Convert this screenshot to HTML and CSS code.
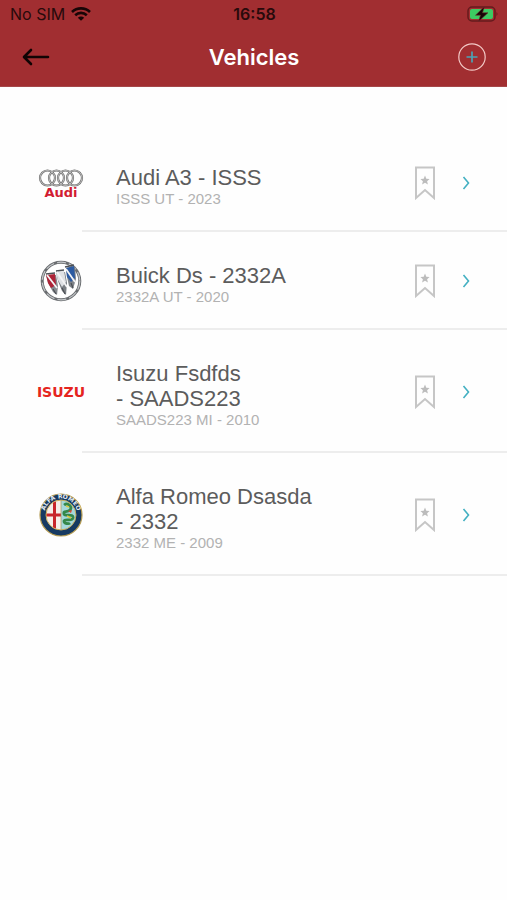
FILE: index.html
```html
<!DOCTYPE html>
<html lang="en">
<head>
<meta charset="utf-8">
<meta name="viewport" content="width=device-width, initial-scale=1">
<title>Vehicles</title>
<link rel="stylesheet" href="styles.css">
</head>
<body>
<svg width="0" height="0" class="sprite" aria-hidden="true">
  <symbol id="bookmark" viewBox="0 0 22 34">
    <path d="M2 1.500H20V32L11 24L2 32Z" fill="none" stroke="#c6c6c6" stroke-width="2"/>
    <path d="M11 9.500L12.300 12.700L15.600 13L13.100 15.200L13.900 18.500L11 16.700L8.100 18.500L8.900 15.200L6.400 13L9.700 12.700Z" fill="#bcbcbc"/>
  </symbol>
  <symbol id="chevron" viewBox="0 0 8 14">
    <path d="M1.500 1L6.500 7L1.500 13" fill="none" stroke="#43b0c2" stroke-width="1.600"/>
  </symbol>
</svg>
<header class="top">
  <div class="status">
    <div class="carrier">
      <span>No SIM</span>
      <svg width="20" height="14" viewBox="0 0 20 14" aria-hidden="true">
        <g fill="none" stroke="#180506" stroke-width="2.600">
          <path d="M1 5C6 .2 14 .2 19 5"/>
          <path d="M4.200 8.200C7.500 5.100 12.500 5.100 15.800 8.200"/>
        </g>
        <path d="M10 13.800L6.800 10.700C8.600 9.200 11.400 9.200 13.200 10.700Z" fill="#180506"/>
      </svg>
    </div>
    <time class="clock">16:58</time>
    <svg class="battery" width="32" height="18" viewBox="0 0 32 18" role="img" aria-label="Battery charging">
      <rect x="1" y="2" width="27" height="14" rx="4" fill="none" stroke="#651b1d" stroke-width="1.500"/>
      <rect x="3" y="4" width="23" height="10" rx="2" fill="#3ccb62"/>
      <path d="M29.500 7Q31.500 9 29.500 11Z" fill="#651b1d"/>
      <path d="M17.500 1.500L8.500 10.200H13.500L11.500 16.500L21 7.800H15.500Z" fill="#180506" stroke="#6f2a2b" stroke-width=".6"/>
    </svg>
  </div>
  <div class="bar">
    <button class="icon-button" type="button" aria-label="Back">
      <svg width="28" height="20" viewBox="0 0 28 20"><path d="M26 10H2.500M9 3L2 10L9 17" fill="none" stroke="#100404" stroke-width="2.600" stroke-linecap="round" stroke-linejoin="round"/></svg>
    </button>
    <h1>Vehicles</h1>
    <button class="icon-button" type="button" aria-label="Add vehicle">
      <svg width="28" height="28" viewBox="0 0 28 28"><circle cx="14" cy="14" r="13.200" fill="none" stroke="#f3c9c6" stroke-width="1.200"/><path d="M14 8.500V19.500M8.500 14H19.500" stroke="#4ba4b7" stroke-width="1.700"/></svg>
    </button>
  </div>
</header>
<main>
  <ul class="list">
    <li class="row">
      <div class="logo">
        <svg width="50" height="36" viewBox="0 0 50 36" role="img" aria-label="Audi">
          <g fill="none" stroke="#6d6d6d" stroke-width="2.200"><circle cx="11.500" cy="13" r="7.500"/><circle cx="20.500" cy="13" r="7.500"/><circle cx="29.500" cy="13" r="7.500"/><circle cx="38.500" cy="13" r="7.500"/></g>
          <g fill="none" stroke="#d2d2d2" stroke-width=".8"><circle cx="11.500" cy="13" r="7.500"/><circle cx="20.500" cy="13" r="7.500"/><circle cx="29.500" cy="13" r="7.500"/><circle cx="38.500" cy="13" r="7.500"/></g>
          <text class="mark mark-audi" x="25" y="32" text-anchor="middle">Audi</text>
        </svg>
      </div>
      <div class="info"><h2>Audi A3 - ISSS</h2><p>ISSS UT - 2023</p></div>
      <button class="save" type="button" aria-label="Bookmark"><svg width="22" height="34"><use href="#bookmark"/></svg></button>
      <a class="open" href="#audi" aria-label="Open Audi A3"><svg width="8" height="14"><use href="#chevron"/></svg></a>
    </li>
    <li class="row">
      <div class="logo">
        <svg width="42" height="42" viewBox="0 0 42 42" role="img" aria-label="Buick">
          <circle cx="21" cy="21" r="18.800" fill="#fff" stroke="#6a6d70" stroke-width="3"/>
          <circle cx="21" cy="21" r="18.800" fill="none" stroke="#c4c7ca" stroke-width="1.200" stroke-dasharray="9 3"/>
          <path d="M6 15H16L18 26L17 35L13 32L8 23Z" fill="#85898e"/>
          <path d="M6 15L15 14L16 25L11 28L8 23Z" fill="#ad2337"/>
          <path d="M16 12H25L27 23L26 35L22 31L18 21Z" fill="#7b7f84"/>
          <path d="M16 12L24 11L26 22L22 27L18 20Z" fill="#dfe1e4"/>
          <path d="M26 8L35 6L36 19L33 29L29 26L27 17Z" fill="#7f848a"/>
          <path d="M26 8L34 6L35 18L31 22L27 17Z" fill="#2c5ba2"/>
          <path d="M6 14L15 13M16 11L24 10M25 7L34 5" stroke="#4c5055" stroke-width="1.500"/>
          <path d="M7 15L17 28M17 12L27 27M26 9L35 22" stroke="#f4f4f5" stroke-width="1.800"/>
          <path d="M13 29L16 34M22 28L25 34M31 23L33 28" stroke="#4c5055" stroke-width="1.200"/>
        </svg>
      </div>
      <div class="info"><h2>Buick Ds - 2332A</h2><p>2332A UT - 2020</p></div>
      <button class="save" type="button" aria-label="Bookmark"><svg width="22" height="34"><use href="#bookmark"/></svg></button>
      <a class="open" href="#buick" aria-label="Open Buick Ds"><svg width="8" height="14"><use href="#chevron"/></svg></a>
    </li>
    <li class="row">
      <div class="logo">
        <svg width="56" height="22" viewBox="0 0 56 22" role="img" aria-label="Isuzu"><text class="mark mark-isuzu" x="28" y="16" text-anchor="middle">ISUZU</text></svg>
      </div>
      <div class="info"><h2>Isuzu Fsdfds<br>- SAADS223</h2><p>SAADS223 MI - 2010</p></div>
      <button class="save" type="button" aria-label="Bookmark"><svg width="22" height="34"><use href="#bookmark"/></svg></button>
      <a class="open" href="#isuzu" aria-label="Open Isuzu Fsdfds"><svg width="8" height="14"><use href="#chevron"/></svg></a>
    </li>
    <li class="row">
      <div class="logo">
        <svg width="44" height="44" viewBox="0 0 44 44" role="img" aria-label="Alfa Romeo">
          <defs><path id="ring" d="M6.700 28A16.500 16.500 0 1 1 37.300 28"/></defs>
          <circle cx="22" cy="22" r="21" fill="#173a62" stroke="#b49a50" stroke-width="1.200"/>
          <circle cx="22" cy="22" r="15" fill="#a5d8dc"/>
          <path d="M22 7A15 15 0 0 0 22 37Z" fill="#f5eeea"/>
          <path d="M15.500 8.500V35.500M7 22H22" stroke="#c8252c" stroke-width="3"/>
          <path d="M25 12C29 9 34 14 31 17C28 20 24 17 25 21C26 24 35 20 34 25C33 29 26 25 25 28C25 31 30 31 31 30" fill="none" stroke="#35884a" stroke-width="2.800"/>
          <path d="M27 13L30 14M28 23L32 25" stroke="#d9c840" stroke-width="1.500"/>
          <path d="M29 18L33 17L32 20" fill="#d84b32"/>
          <circle cx="22" cy="22" r="15" fill="none" stroke="#c9ac59" stroke-width="1"/>
          <path d="M22 7V37" stroke="#b49a50" stroke-width=".7"/>
          <text class="mark mark-alfa"><textPath href="#ring" startOffset="50%" text-anchor="middle">ALFA ROMEO</textPath></text>
        </svg>
      </div>
      <div class="info"><h2>Alfa Romeo Dsasda<br>- 2332</h2><p>2332 ME - 2009</p></div>
      <button class="save" type="button" aria-label="Bookmark"><svg width="22" height="34"><use href="#bookmark"/></svg></button>
      <a class="open" href="#alfa" aria-label="Open Alfa Romeo Dsasda"><svg width="8" height="14"><use href="#chevron"/></svg></a>
    </li>
  </ul>
</main>
</body>
</html>
```
FILE: styles.css
```css
* {
  box-sizing: border-box;
}

body {
  margin: 0;
  background: #fefefe;
  font-family: "Liberation Sans", Arial, sans-serif;
}

h1, h2, p, ul {
  margin: 0;
  padding: 0;
}

button {
  padding: 0;
  border: 0;
  background: none;
}

svg {
  display: block;
  flex: none;
}

.sprite {
  position: absolute;
}

.top {
  background: #a12e31;
  border-bottom: 1px solid #a5484a;
  font-family: Inter, "Liberation Sans", sans-serif;
}

.status {
  display: grid;
  grid-template-columns: 1fr auto 1fr;
  align-items: center;
  height: 28px;
  padding: 0 8px 0 10px;
  color: #280a0b;
  font-size: 16px;
  line-height: 28px;
}

.carrier {
  display: flex;
  align-items: center;
  gap: 6px;
}

.clock {
  font-weight: 600;
}

.battery {
  justify-self: end;
}

.bar {
  display: flex;
  align-items: center;
  justify-content: space-between;
  height: 58px;
  padding: 0 21px 0 22px;
}

.icon-button {
  display: flex;
}

h1 {
  color: #fff;
  font-size: 22px;
  font-weight: 600;
  line-height: 28px;
}

.list {
  padding-top: 47px;
  list-style: none;
}

.row {
  display: grid;
  grid-template-columns: 50px 1fr 22px 34px;
  align-items: center;
  padding: 0 37px 0 36px;
  background: linear-gradient(#ededed, #ededed) 82px 100% / 100% 2px no-repeat;
}

.logo {
  display: flex;
  justify-content: center;
}

.info {
  padding: 31px 0 25px 30px;
}

h2 {
  color: #5c5c5c;
  font-size: 22px;
  font-weight: 400;
  line-height: 25px;
}

.info p {
  color: #b2b2b2;
  font-size: 15px;
  line-height: 17px;
}

.open {
  justify-self: end;
}

.mark {
  font-family: "DejaVu Sans", sans-serif;
  font-weight: 700;
}

.mark-audi {
  fill: #d21c32;
  font-size: 13px;
}

.mark-isuzu {
  fill: #e5251f;
  font-size: 14px;
}

.mark-alfa {
  fill: #e8edf2;
  font-size: 6px;
}
```
